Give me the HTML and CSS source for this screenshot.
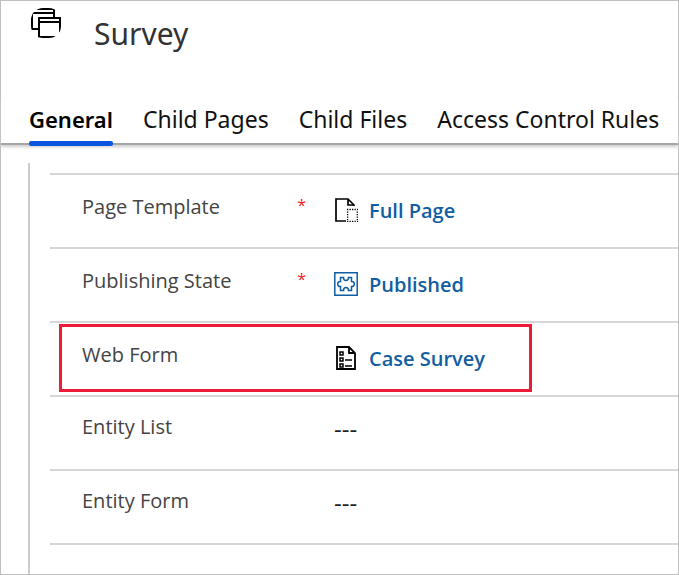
FILE: index.html
```html
<!DOCTYPE html>
<html lang="en">
<head>
<meta charset="utf-8">
<meta name="viewport" content="width=device-width, initial-scale=1">
<title>Survey</title>
<link rel="stylesheet" href="styles.css">
</head>
<body>
<div class="page">
  <header class="header">
    <svg class="header-icon" viewBox="0 0 32 32" aria-hidden="true">
      <clipPath id="disc"><rect x="1" y="1" width="30" height="30" rx="12"/></clipPath>
      <g clip-path="url(#disc)" fill="none" stroke="#000" stroke-width="2">
        <path d="M2 2H24V12M2 6H24M2 2V22H9"/>
        <path d="M9 11H30V30H9Z" fill="#fff"/>
        <path d="M9 15H30"/>
      </g>
      <path d="M8 11H31M30 10V19M9 10V29" fill="none" stroke="#000" stroke-width="2"/>
    </svg>
    <h1 class="title">Survey</h1>
  </header>
  <nav class="tabs" aria-label="Form sections">
    <a class="tab tab-active" href="#general" aria-current="page">General</a>
    <a class="tab" href="#pages">Child Pages</a>
    <a class="tab" href="#files">Child Files</a>
    <a class="tab" href="#rules">Access Control Rules</a>
  </nav>
  <main class="section" id="general">
    <dl class="fields">
      <div class="field">
        <dt class="label">Page Template<span class="required">*</span></dt>
        <dd class="value">
          <svg class="icon" viewBox="0 0 24 24" aria-hidden="true">
            <path d="M12 23H2V1H14L20 7V8M14 1V7H20" fill="none" stroke="#000" stroke-width="1.7"/>
            <path d="M13 11.500H24M13 23.300H24" fill="none" stroke="#000" stroke-width="1.300" stroke-dasharray="1.300 1.200"/>
            <path d="M13.600 13.500V22M23.300 13.500V22" fill="none" stroke="#000" stroke-width="1.300" stroke-dasharray="1.300 1.200"/>
          </svg>
          <a class="link" href="#full-page">Full Page</a>
        </dd>
      </div>
      <div class="field">
        <dt class="label">Publishing State<span class="required">*</span></dt>
        <dd class="value">
          <svg class="icon" viewBox="0 0 24 24" aria-hidden="true">
            <path d="M.8.8H23.2V23.2H.8Z" fill="none" stroke="#115ea3" stroke-width="1.5"/>
            <path d="M6.500 5.500H9.500C9.500 9.500 14.500 9.500 14.500 5.500H17.500V9.500C21.300 9 21.300 15 17.500 14.500V18.500H14.500C14.500 14.500 9.500 14.500 9.500 18.500H6.500V14.500C2.700 15 2.700 9 6.500 9.500Z" fill="none" stroke="#115ea3" stroke-width="1.5"/>
          </svg>
          <a class="link" href="#published">Published</a>
        </dd>
      </div>
      <div class="field field-marked">
        <dt class="label">Web Form</dt>
        <dd class="value">
          <svg class="icon" viewBox="0 0 24 24" aria-hidden="true">
            <path d="M3 1H15L21 7V23H3ZM15 1V7H21" fill="none" stroke="#000" stroke-width="1.8"/>
            <path d="M6 6H9V9H6ZM6 12H9V15H6ZM6 18H9V21H6ZM11 14H18M11 20H18" fill="none" stroke="#000" stroke-width="1.5"/>
          </svg>
          <a class="link" href="#case-survey">Case Survey</a>
        </dd>
      </div>
      <div class="field field-empty">
        <dt class="label">Entity List</dt>
        <dd class="value">---</dd>
      </div>
      <div class="field field-empty">
        <dt class="label">Entity Form</dt>
        <dd class="value">---</dd>
      </div>
    </dl>
  </main>
</div>
</body>
</html>
```
FILE: styles.css
```css
*,
*::before,
*::after {
  box-sizing: border-box;
}

body {
  margin: 0;
  background: #fff;
  color: #000;
  font-family: "Segoe UI", "Noto Sans", sans-serif;
}

.page {
  display: flex;
  flex-direction: column;
  min-height: 100vh;
  border: 1px solid #bfbfbf;
}

.header {
  display: flex;
  align-items: flex-start;
  gap: 32px;
  padding: 6px 29px 0;
}

.header-icon {
  width: 32px;
  height: 32px;
}

.title {
  margin: 7px 0 0;
  color: #333;
  font-size: 30px;
  font-weight: 400;
  line-height: 40px;
}

.tabs {
  display: flex;
  gap: 30px;
  margin-top: 45px;
  padding-left: 28px;
  border-bottom: 2px solid #a6a6a6;
  box-shadow: 0 2px 3px #ccc;
}

.tab {
  height: 44px;
  color: #111;
  font-size: 23px;
  line-height: 40px;
  text-decoration: none;
  white-space: nowrap;
}

.tab-active {
  position: relative;
  color: #000;
  font-size: 22px;
  font-weight: 600;
}

.tab-active::after {
  content: "";
  position: absolute;
  left: 0;
  right: 0;
  bottom: -3px;
  height: 5px;
  border-radius: 2px;
  background: #0b56e0;
}

.section {
  flex: 1;
  margin: 18px 0 0 27px;
  padding: 10px 0 29px 20px;
  border-left: 2px solid #ccc;
}

.fields {
  margin: 0;
  border-top: 2px solid #d6d6d6;
}

.field {
  position: relative;
  display: grid;
  grid-template-columns: 224px 1fr;
  column-gap: 28px;
  height: 74px;
  padding: 18px 0 0 32px;
  border-bottom: 2px solid #d6d6d6;
}

.field-empty {
  padding-top: 16px;
}

.label {
  display: flex;
  justify-content: space-between;
  color: #444;
  font-family: "Segoe UI", "Open Sans", sans-serif;
  font-size: 20px;
  line-height: 28px;
}

.required {
  color: #f22;
  font-size: 16px;
  line-height: 24px;
}

.value {
  display: flex;
  align-items: center;
  gap: 11px;
  height: 34px;
  margin: 0;
  color: #222;
  font-family: "Segoe UI", "Open Sans", sans-serif;
  font-size: 20px;
}

.field-empty .value {
  height: 30px;
  font-size: 24px;
}

.icon {
  flex: none;
  width: 24px;
  height: 24px;
}

.link {
  color: #115ea3;
  font-weight: 600;
  text-decoration: none;
}

.field-marked::after {
  content: "";
  position: absolute;
  top: 1px;
  bottom: 3px;
  left: 9px;
  width: 473px;
  max-width: calc(100% - 18px);
  border: 3px solid #ed1b38;
}
```
